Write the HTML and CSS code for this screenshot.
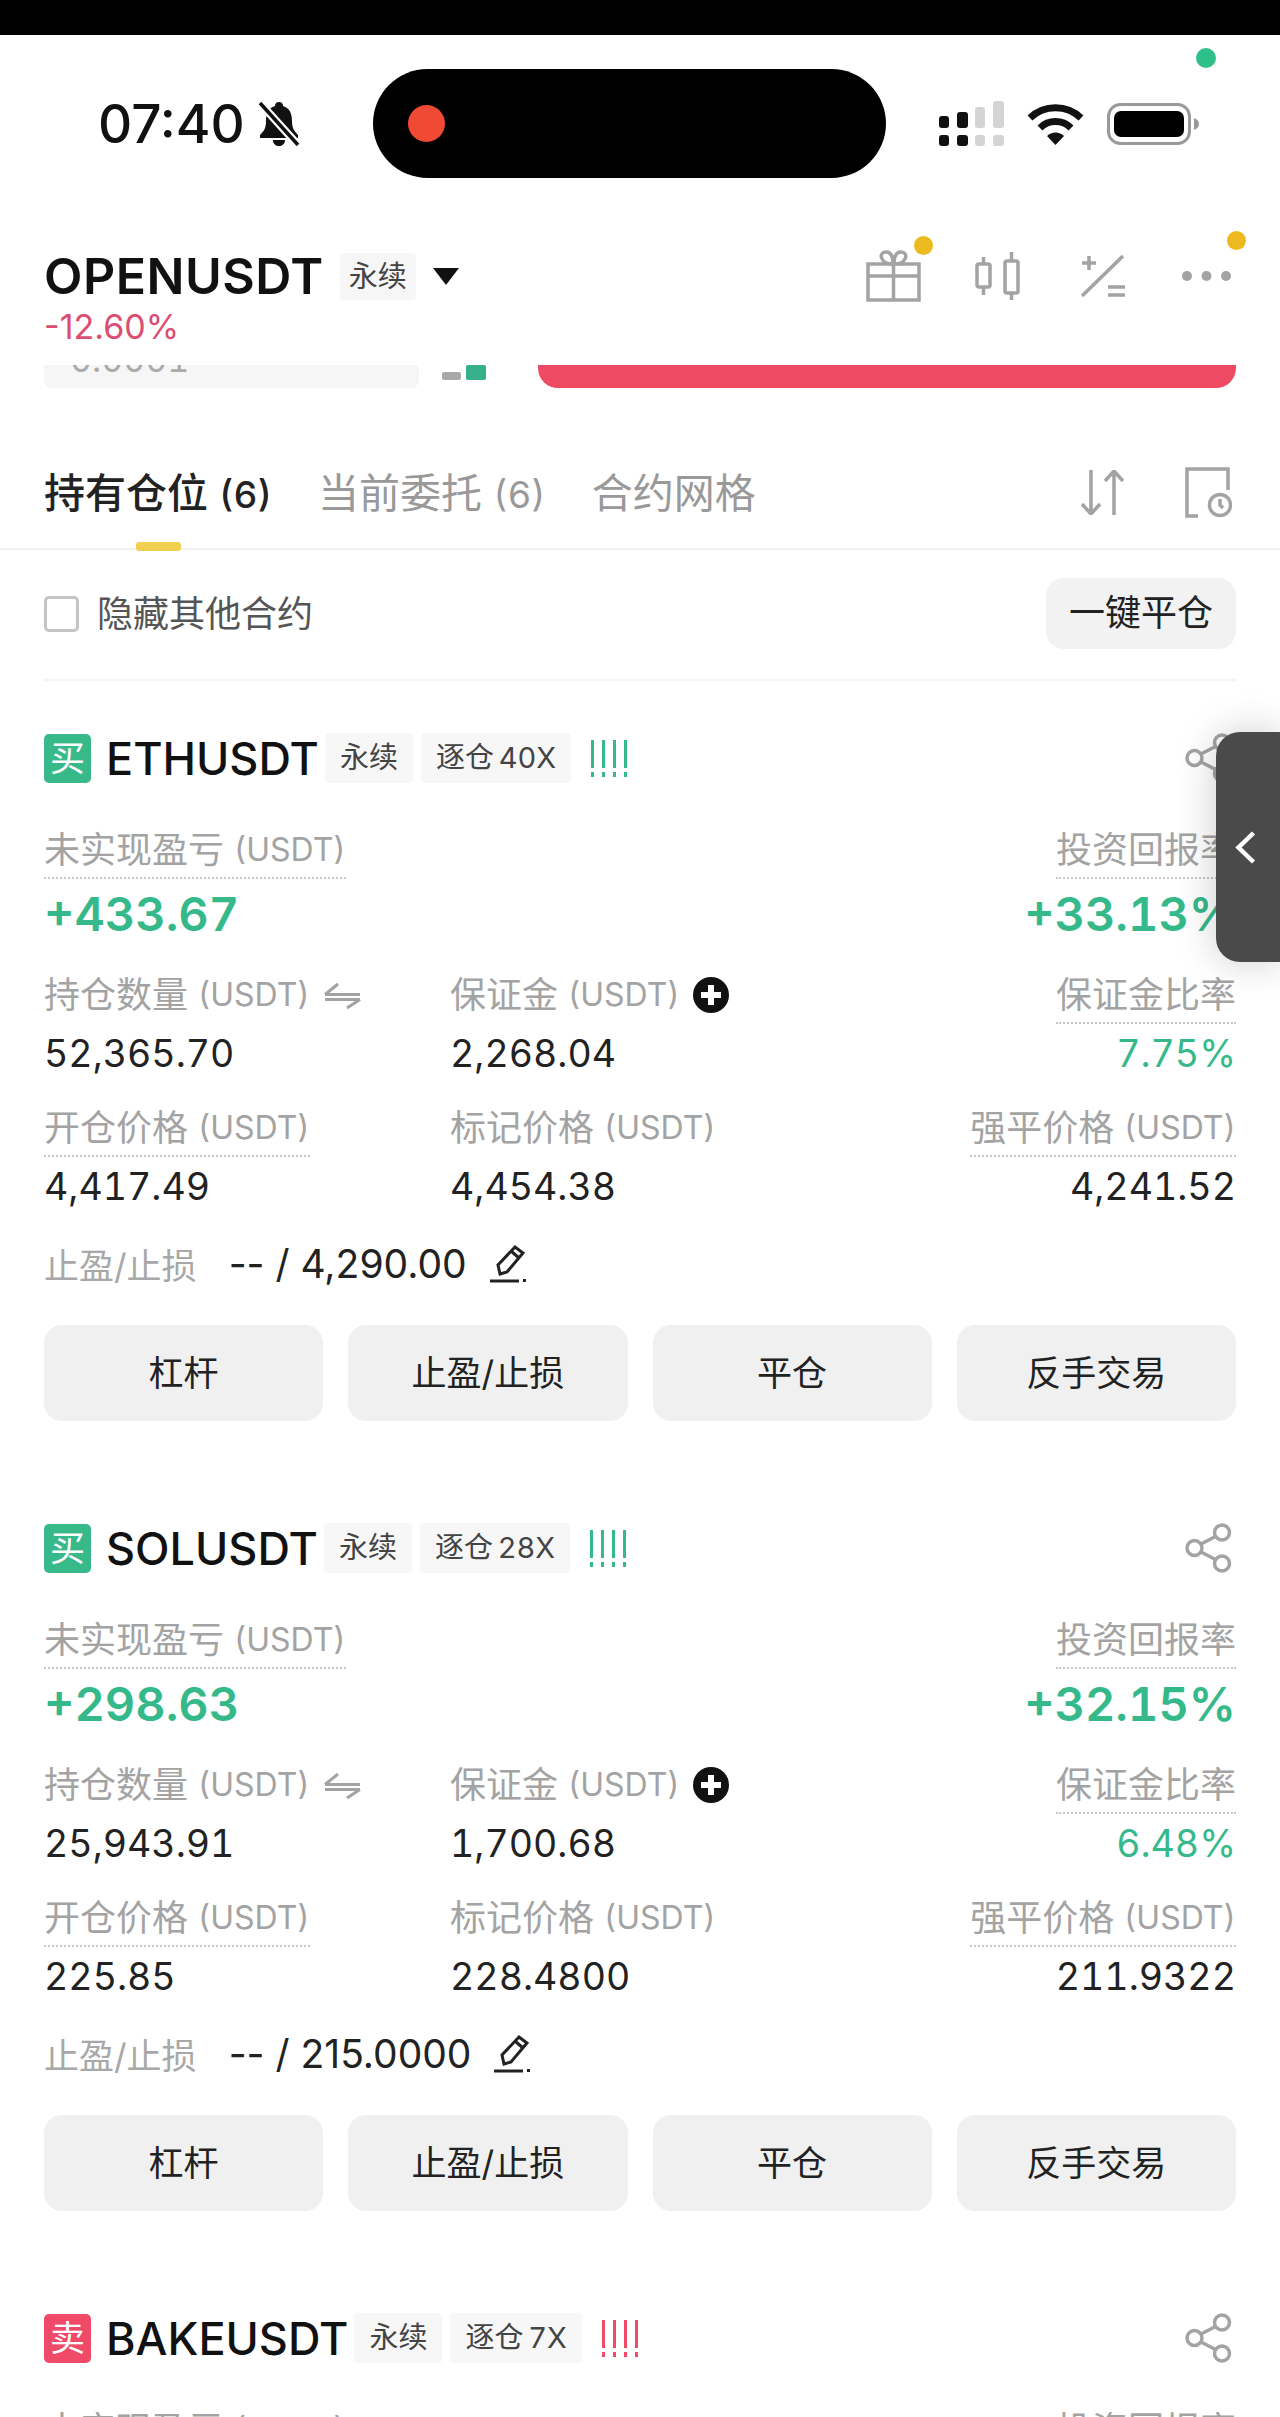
FILE: index.html
```html
<!DOCTYPE html>
<html lang="zh-CN">
<head>
    <meta charset="UTF-8">
    <title>OPENUSDT 持有仓位</title>
    <link rel="stylesheet" href="styles.css">
</head>
<body>
    <svg class="sprites" width="0" height="0">
        <symbol id="i-share" viewBox="0 0 47 50"><g fill="none" stroke="currentColor" stroke-width="3.5"><circle cx="37" cy="9.5" r="7.5"/><circle cx="9.5" cy="25" r="7.5"/><circle cx="37" cy="40.5" r="7.5"/><path d="M16 21 30.500 13.500M16 29 30.500 36.500"/></g></symbol>
        <symbol id="i-lev" viewBox="0 0 38 37"><g fill="currentColor"><rect x="1" y="0" width="3" height="28"/><rect x="1" y="32" width="3" height="5"/><rect x="12" y="0" width="3" height="28"/><rect x="12" y="32" width="3" height="5"/><rect x="23" y="0" width="3" height="28"/><rect x="23" y="32" width="3" height="5"/><rect x="34" y="0" width="3" height="28"/><rect x="34" y="32" width="3" height="5"/></g></symbol>
        <symbol id="i-swap" viewBox="0 0 37 27"><path d="M1 12.500H36M1 12.500 14 2M1 17.500H36M36 17.500 23 26" fill="none" stroke="currentColor" stroke-width="3"/></symbol>
        <symbol id="i-plus" viewBox="0 0 36 36"><circle cx="18" cy="18" r="18" fill="#111"/><path d="M18 8V28M8 18H28" stroke="#fff" stroke-width="6"/></symbol>
        <symbol id="i-pencil" viewBox="0 0 39 40"><g fill="none" stroke="#222" stroke-width="3"><path d="M11 31 9 22 26 4 34 10 18 29Z"/><path d="M22 8 30 15"/><path d="M1 38H30"/></g><rect x="34" y="36" width="3" height="3" fill="#222"/></symbol>
    </svg>

    <div class="phone">
        <div class="top-black"></div>

        <div class="status">
            <span class="clock">07:40</span>
            <svg class="bell" viewBox="0 0 42 45" width="42" height="45">
                <path d="M21 1C24 1 25 3 25 5C32 7 34 13 34 20C34 27 36 30 40 34V37H2V34C6 30 8 27 8 20C8 13 10 7 17 5C17 3 18 1 21 1ZM15 39H27C27 43 24 45 21 45C18 45 15 43 15 39Z" fill="#111"/>
                <path d="M2 2 40 44" stroke="#fff" stroke-width="8"/>
                <path d="M2 2 40 44" stroke="#111" stroke-width="3.500"/>
            </svg>
            <div class="island"><span class="rec-dot"></span></div>
            <svg class="signal" viewBox="0 0 65 45" width="65" height="45">
                <g fill="#111"><rect x="0" y="15" width="10" height="12" rx="3"/><rect x="18" y="11" width="11" height="16" rx="3"/><rect x="0" y="34" width="10" height="11" rx="3"/><rect x="18" y="34" width="11" height="11" rx="3"/></g>
                <g fill="#d4d4d4"><rect x="36" y="6" width="10" height="21" rx="3"/><rect x="54" y="0" width="11" height="27" rx="3"/><rect x="36" y="34" width="10" height="11" rx="3"/><rect x="54" y="34" width="11" height="11" rx="3"/></g>
            </svg>
            <svg class="wifi" viewBox="0 0 57 42" width="57" height="42">
                <g fill="none" stroke="#111" stroke-width="7"><path d="M3 15A37 37 0 0 1 54 15"/><path d="M13 25A22 22 0 0 1 44 25"/></g>
                <path d="M20 33A12 12 0 0 1 37 33L28.500 42Z" fill="#111"/>
            </svg>
            <svg class="battery" viewBox="0 0 92 42" width="92" height="42">
                <rect x="1.500" y="1.500" width="81" height="39" rx="12" fill="none" stroke="#999" stroke-width="3"/>
                <rect x="7" y="8" width="70" height="26" rx="7" fill="#000"/>
                <path d="M87 15C90 16 92 18 92 21C92 24 90 26 87 27Z" fill="#999"/>
            </svg>
            <span class="cam-dot"></span>
        </div>

        <div class="market">
            <div class="market-row">
                <div class="market-name">
                    <span class="market-title">OPENUSDT</span>
                    <span class="market-tag">永续</span>
                    <span class="caret"></span>
                </div>
                <div class="market-tools">
                    <span class="tool">
                        <svg viewBox="0 0 55 52" width="55" height="52"><g fill="none" stroke="currentColor" stroke-width="3.500"><path d="M2 14H53V50H2ZM2 26H53M27.500 14V50"/><path d="M27 14C14 14 12 2 20 2C25 2 27 7 27 14ZM28 14C41 14 43 2 35 2C30 2 28 7 28 14Z"/></g></svg>
                        <span class="notice-dot gift-dot"></span>
                    </span>
                    <svg class="tool candles" viewBox="0 0 45 48" width="45" height="48"><g fill="none" stroke="currentColor" stroke-width="3.500"><rect x="2" y="12" width="13" height="23" rx="2"/><path d="M8.500 5V12M8.500 35V43"/><rect x="30" y="9" width="13" height="32" rx="2"/><path d="M36.500 0V9M36.500 41V48"/></g></svg>
                    <svg class="tool calc" viewBox="0 0 45 43" width="45" height="43"><g fill="none" stroke="currentColor" stroke-width="3.500"><path d="M43 1 2 41M9 1V15M2 8H16M28 32H45M28 40H45"/></g></svg>
                    <span class="tool more">
                        <svg viewBox="0 0 49 10" width="49" height="10"><g fill="currentColor"><circle cx="5" cy="5" r="5"/><circle cx="24.500" cy="5" r="5"/><circle cx="44" cy="5" r="5"/></g></svg>
                        <span class="notice-dot more-dot"></span>
                    </span>
                </div>
            </div>
            <div class="market-change">-12.60%</div>
            <div class="book-row">
                <div class="book-price"><span>0.0001</span></div>
                <div class="book-bars"><span class="bar-gray"></span><span class="bar-green"></span></div>
                <div class="book-red"></div>
            </div>
        </div>

        <div class="tabs">
            <span class="tab active">持有仓位 <em>(6)</em></span>
            <span class="tab">当前委托 <em>(6)</em></span>
            <span class="tab">合约网格</span>
            <div class="tabs-tools">
                <svg viewBox="0 0 43 45" width="43" height="45"><path d="M10 0V44M1 34 10 44 19 34M33 45V1M24 11 33 1 42 11" fill="none" stroke="currentColor" stroke-width="3.500"/></svg>
                <svg viewBox="0 0 47 51" width="47" height="51"><g fill="none" stroke="currentColor" stroke-width="3.500"><path d="M43 23V2H2V49H13"/><circle cx="35" cy="38" r="10.500"/><path d="M35 32V38L38 41"/></g></svg>
            </div>
        </div>

        <div class="filter">
            <label class="hide-others"><span class="checkbox"></span><span class="hide-text">隐藏其他合约</span></label>
            <span class="close-all">一键平仓</span>
        </div>

        <div class="card">
            <div class="card-head">
                <span class="side buy">买</span>
                <span class="symbol">ETHUSDT</span>
                <span class="tag">永续</span>
                <span class="tag">逐仓 40X</span>
                <svg class="lev green" width="38" height="37"><use href="#i-lev"/></svg>
                <svg class="share" width="49" height="50"><use href="#i-share"/></svg>
            </div>
            <div class="pnl-row">
                <div>
                    <div class="label dotted">未实现盈亏&nbsp;<em>(USDT)</em></div>
                    <div class="pnl green">+433.67</div>
                </div>
                <div class="right">
                    <div class="label dotted">投资回报率</div>
                    <div class="pnl green">+33.13%</div>
                </div>
            </div>
            <div class="stats">
                <div>
                    <div class="label">持仓数量&nbsp;<em>(USDT)</em><svg class="swap" width="37" height="27"><use href="#i-swap"/></svg></div>
                    <div class="value">52,365.70</div>
                </div>
                <div>
                    <div class="label">保证金&nbsp;<em>(USDT)</em><svg class="plus" width="36" height="36"><use href="#i-plus"/></svg></div>
                    <div class="value">2,268.04</div>
                </div>
                <div class="right">
                    <div class="label dotted">保证金比率</div>
                    <div class="value green">7.75%</div>
                </div>
                <div>
                    <div class="label dotted">开仓价格&nbsp;<em>(USDT)</em></div>
                    <div class="value">4,417.49</div>
                </div>
                <div>
                    <div class="label">标记价格&nbsp;<em>(USDT)</em></div>
                    <div class="value">4,454.38</div>
                </div>
                <div class="right">
                    <div class="label dotted">强平价格&nbsp;<em>(USDT)</em></div>
                    <div class="value">4,241.52</div>
                </div>
            </div>
            <div class="tpsl">
                <span class="tpsl-label">止盈/止损</span>
                <span class="tpsl-value">-- / 4,290.00</span>
                <svg class="pencil" width="39" height="40"><use href="#i-pencil"/></svg>
            </div>
            <div class="actions">
                <span class="action">杠杆</span>
                <span class="action">止盈/止损</span>
                <span class="action">平仓</span>
                <span class="action">反手交易</span>
            </div>
        </div>

        <div class="card">
            <div class="card-head">
                <span class="side buy">买</span>
                <span class="symbol">SOLUSDT</span>
                <span class="tag">永续</span>
                <span class="tag">逐仓 28X</span>
                <svg class="lev green" width="38" height="37"><use href="#i-lev"/></svg>
                <svg class="share" width="49" height="50"><use href="#i-share"/></svg>
            </div>
            <div class="pnl-row">
                <div>
                    <div class="label dotted">未实现盈亏&nbsp;<em>(USDT)</em></div>
                    <div class="pnl green">+298.63</div>
                </div>
                <div class="right">
                    <div class="label dotted">投资回报率</div>
                    <div class="pnl green">+32.15%</div>
                </div>
            </div>
            <div class="stats">
                <div>
                    <div class="label">持仓数量&nbsp;<em>(USDT)</em><svg class="swap" width="37" height="27"><use href="#i-swap"/></svg></div>
                    <div class="value">25,943.91</div>
                </div>
                <div>
                    <div class="label">保证金&nbsp;<em>(USDT)</em><svg class="plus" width="36" height="36"><use href="#i-plus"/></svg></div>
                    <div class="value">1,700.68</div>
                </div>
                <div class="right">
                    <div class="label dotted">保证金比率</div>
                    <div class="value green">6.48%</div>
                </div>
                <div>
                    <div class="label dotted">开仓价格&nbsp;<em>(USDT)</em></div>
                    <div class="value">225.85</div>
                </div>
                <div>
                    <div class="label">标记价格&nbsp;<em>(USDT)</em></div>
                    <div class="value">228.4800</div>
                </div>
                <div class="right">
                    <div class="label dotted">强平价格&nbsp;<em>(USDT)</em></div>
                    <div class="value">211.9322</div>
                </div>
            </div>
            <div class="tpsl">
                <span class="tpsl-label">止盈/止损</span>
                <span class="tpsl-value">-- / 215.0000</span>
                <svg class="pencil" width="39" height="40"><use href="#i-pencil"/></svg>
            </div>
            <div class="actions">
                <span class="action">杠杆</span>
                <span class="action">止盈/止损</span>
                <span class="action">平仓</span>
                <span class="action">反手交易</span>
            </div>
        </div>

        <div class="card">
            <div class="card-head">
                <span class="side sell">卖</span>
                <span class="symbol">BAKEUSDT</span>
                <span class="tag">永续</span>
                <span class="tag">逐仓 7X</span>
                <svg class="lev red" width="38" height="37"><use href="#i-lev"/></svg>
                <svg class="share" width="49" height="50"><use href="#i-share"/></svg>
            </div>
            <div class="pnl-row">
                <div><div class="label dotted">未实现盈亏&nbsp;<em>(USDT)</em></div></div>
                <div class="right"><div class="label dotted">投资回报率</div></div>
            </div>
        </div>

        <!-- 右侧收起按钮 -->
        <div class="side-handle">
            <svg viewBox="0 0 21 33" width="21" height="33"><path d="M18.500 2 3.500 16.500 18.500 31" fill="none" stroke="#fff" stroke-width="4.500"/></svg>
        </div>
    </div>
</body>
</html>
```

FILE: styles.css
```css
html, body {
    margin: 0;
    padding: 0;
    background-color: #fff;
}

body {
    font-family: Inter, "Noto Sans CJK SC", sans-serif;
    font-variant-numeric: tabular-nums;
    color: #222;
}

.sprites {
    position: absolute;
}

.phone {
    position: relative;
    width: 1280px;
    height: 2417px;
    overflow: hidden;
}

.top-black {
    height: 35px;
    background-color: #000;
}

/* barra de estado */
.status {
    position: relative;
    display: flex;
    align-items: center;
    height: 177px;
    padding-left: 98px;
}

.clock {
    width: 145px;
    font-size: 53px;
    font-weight: 500;
    font-variant-numeric: normal;
    color: #111;
    white-space: nowrap;
}

.bell {
    margin-left: 15px;
}

.island {
    display: flex;
    align-items: center;
    width: 513px;
    height: 109px;
    margin-left: 73px;
    padding-left: 35px;
    box-sizing: border-box;
    background-color: #000;
    border-radius: 55px;
}

.rec-dot {
    width: 37px;
    height: 37px;
    border-radius: 50%;
    background-color: #f04a35;
}

.signal {
    margin-left: 53px;
}

.wifi {
    margin-left: 23px;
}

.battery {
    margin-left: 23px;
}

.cam-dot {
    position: absolute;
    left: 1196px;
    top: 13px;
    width: 20px;
    height: 20px;
    border-radius: 50%;
    background-color: #2fc08a;
}

/* cabecera del mercado */
.market {
    padding: 38px 44px 0;
}

.market-row {
    display: flex;
    justify-content: space-between;
    align-items: center;
    height: 52px;
}

.market-name {
    display: flex;
    align-items: center;
}

.market-title {
    font-size: 50px;
    font-weight: 600;
    letter-spacing: 0.5px;
    color: #111;
}

.market-tag {
    margin-left: 16px;
    padding: 6px 9px;
    font-size: 29px;
    line-height: 35px;
    color: #444;
    background-color: #f6f6f6;
    border-radius: 4px;
}

.caret {
    width: 0;
    height: 0;
    margin-left: 17px;
    border-left: 13px solid transparent;
    border-right: 13px solid transparent;
    border-top: 17px solid #111;
}

.market-tools {
    display: flex;
    align-items: center;
    margin-right: 5px;
    color: #a3a3a3;
}

.tool {
    position: relative;
    display: flex;
    align-items: center;
}

.candles {
    margin-left: 54px;
}

.calc {
    margin-left: 60px;
}

.more {
    margin-left: 57px;
}

.notice-dot {
    position: absolute;
    width: 19px;
    height: 19px;
    border-radius: 50%;
    background-color: #ecb91f;
}

.gift-dot {
    left: 48px;
    top: -14px;
}

.more-dot {
    left: 45px;
    top: -40px;
}

.market-change {
    margin-top: 8px;
    font-size: 34px;
    font-variant-numeric: normal;
    line-height: 34px;
    color: #dc4d72;
}

.book-row {
    display: flex;
    margin-top: 21px;
}

.book-price {
    width: 375px;
    height: 23px;
    overflow: hidden;
    background-color: #f6f6f6;
    border-radius: 0 0 8px 8px;
}

.book-price span {
    display: block;
    margin-top: -25px;
    padding-left: 26px;
    font-size: 34px;
    line-height: 40px;
    color: #aaa;
}

.book-bars {
    display: flex;
    align-items: flex-end;
    gap: 5px;
    height: 15px;
    margin-left: 23px;
}

.bar-gray {
    width: 19px;
    height: 8px;
    background-color: #a8a8a8;
    border-radius: 2px;
}

.bar-green {
    width: 20px;
    height: 15px;
    background-color: #36b08a;
    border-radius: 2px;
}

.book-red {
    flex-grow: 1;
    height: 23px;
    margin-left: 52px;
    background-color: #ef4a64;
    border-radius: 0 0 20px 20px;
}

/* pestañas */
.tabs {
    display: flex;
    align-items: center;
    height: 51px;
    padding: 79px 44px 30px;
    border-bottom: 2px solid #f2f2f2;
    gap: 46px;
}

.tab {
    position: relative;
    padding-bottom: 6px;
    font-size: 41px;
    font-weight: 400;
    color: #999;
    white-space: nowrap;
}

.tab em {
    font-style: normal;
    font-size: 37px;
}

.tab.active {
    font-weight: 500;
    color: #222;
}

.tab.active::after {
    content: "";
    position: absolute;
    left: 92px;
    bottom: -25px;
    width: 45px;
    height: 9px;
    background-color: #f0d050;
    border-radius: 3px;
}

.tabs-tools {
    display: flex;
    align-items: center;
    gap: 61px;
    margin-left: auto;
    margin-right: 4px;
    color: #a3a3a3;
}

/* filtro */
.filter {
    display: flex;
    justify-content: space-between;
    align-items: center;
    margin: 0 44px 16px;
    padding: 28px 0 30px;
    border-bottom: 2px solid #f5f5f5;
}

.hide-others {
    display: flex;
    align-items: center;
    font-size: 36px;
    color: #555;
}

.hide-text {
    margin-bottom: 6px;
}

.checkbox {
    width: 29px;
    height: 30px;
    margin-right: 18px;
    border: 3px solid #c4c4c4;
    border-radius: 5px;
}

.close-all {
    width: 190px;
    height: 71px;
    font-size: 36px;
    line-height: 71px;
    text-align: center;
    background-color: #f2f2f2;
    border-radius: 18px;
}

/* tarjetas de posición */
.card {
    margin: 0 44px;
    padding: 36px 0 66px;
}

.card-head {
    display: flex;
    align-items: center;
    height: 50px;
}

.side {
    width: 47px;
    height: 49px;
    font-size: 35px;
    line-height: 49px;
    text-align: center;
    color: #fff;
    border-radius: 5px;
}

.side.buy {
    background-color: #38b98a;
}

.side.sell {
    background-color: #ef4a68;
}

.symbol {
    margin-left: 15px;
    margin-right: 6px;
    font-size: 45px;
    font-weight: 500;
    color: #111;
}

.tag {
    margin-right: 8px;
    padding: 0 15px;
    font-size: 29px;
    line-height: 50px;
    word-spacing: -3px;
    color: #444;
    background-color: #f7f7f7;
    border-radius: 4px;
}

.lev {
    margin-left: 11px;
}

.share {
    margin-left: auto;
    margin-right: 3px;
    color: #a3a3a3;
}

.green {
    color: #36b98a;
}

.red {
    color: #ef4a68;
}

.right {
    text-align: right;
}

.label {
    display: inline-flex;
    align-items: center;
    height: 36px;
    padding-bottom: 9px;
    border-bottom: 2px dotted transparent;
    font-size: 36px;
    line-height: 36px;
    color: #a3a3a3;
    white-space: nowrap;
}

.label em {
    font-style: normal;
    font-size: 32px;
}

.label.dotted {
    border-bottom-color: #c8c8c8;
}

.pnl-row {
    display: flex;
    justify-content: space-between;
    margin-top: 49px;
}

.pnl {
    margin-top: 13px;
    font-size: 47px;
    font-weight: 600;
    line-height: 44px;
}

.stats {
    display: grid;
    grid-template-columns: 406px 1fr auto;
    row-gap: 36px;
    margin-top: 41px;
}

.value {
    margin-top: 10px;
    font-size: 37.500px;
    line-height: 40px;
}

.swap {
    margin-left: 14px;
    color: #a3a3a3;
}

.plus {
    margin-left: 13px;
}

.tpsl {
    display: flex;
    align-items: center;
    height: 44px;
    margin-top: 34px;
}

.tpsl-label {
    font-size: 35px;
    color: #a8a8a8;
}

.tpsl-value {
    margin-left: 32px;
    font-size: 39px;
    font-variant-numeric: normal;
}

.pencil {
    margin-left: 22px;
}

.actions {
    display: grid;
    grid-template-columns: repeat(4, 1fr);
    gap: 25px;
    margin-top: 40px;
}

.action {
    height: 96px;
    font-size: 35px;
    line-height: 96px;
    text-align: center;
    background-color: #f0f0f0;
    border-radius: 18px;
}

.side-handle {
    position: absolute;
    left: 1216px;
    top: 732px;
    display: flex;
    justify-content: center;
    align-items: center;
    width: 59px;
    height: 230px;
    padding-right: 5px;
    background-color: #4a4a4a;
    border-radius: 24px 0 0 24px;
    box-shadow: 0 0 40px rgba(0, 0, 0, 0.2);
}
```
